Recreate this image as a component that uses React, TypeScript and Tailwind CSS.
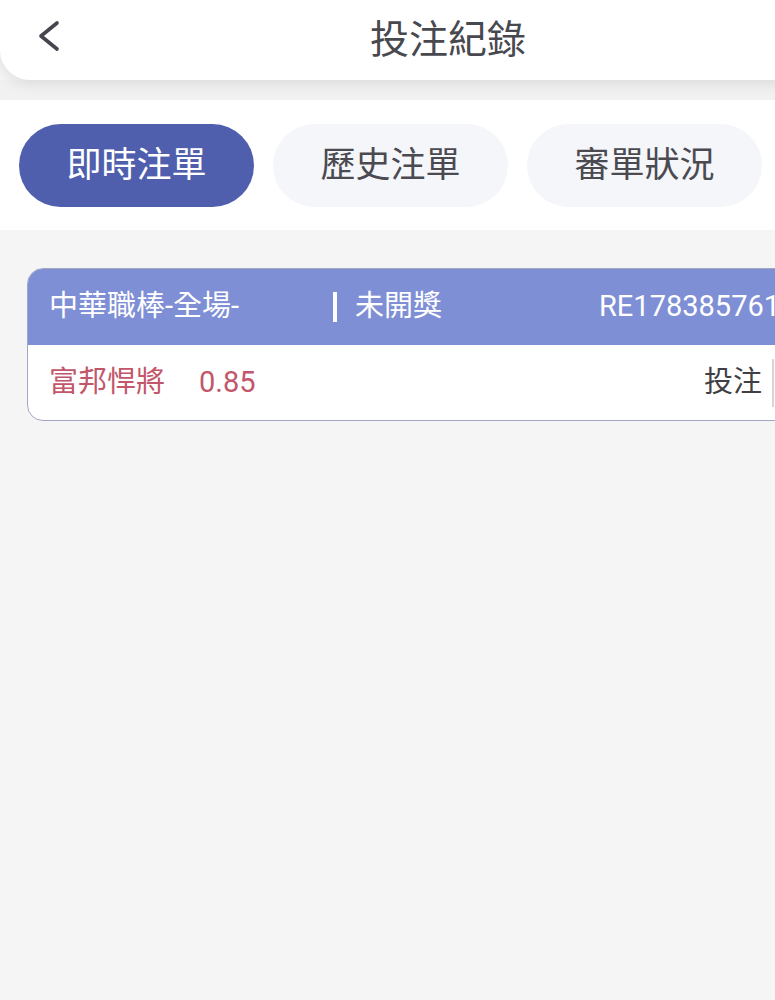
const tabs = [
  { label: "即時注單", active: true },
  { label: "歷史注單", active: false },
  { label: "審單狀況", active: false },
];

export default function App() {
  return (
    <div
      className="w-[775px] h-[1000px] overflow-hidden bg-[#f6f5f5]"
      style={{ fontFamily: 'Roboto, "Noto Sans CJK TC", "Noto Sans", sans-serif' }}
    >
      <div className="w-[896px]">
        <header className="relative z-10 h-[80px] bg-white rounded-b-[30px] shadow-[0_4px_14px_rgba(0,0,0,0.09)] flex items-center justify-center">
          <svg
            className="absolute left-[34px] top-[18px]"
            width="30"
            height="36"
            viewBox="0 0 30 36"
            fill="none"
          >
            <polyline
              points="23,5 7,18 23,31"
              stroke="#45454f"
              strokeWidth="3.6"
              strokeLinecap="round"
              strokeLinejoin="round"
            />
          </svg>
          <h1 className="text-[39px] leading-none text-[#48484f]">投注紀錄</h1>
        </header>

        <div className="h-[20px] bg-[#f1f1f1]" />

        <nav className="bg-white h-[130px] px-[19px] flex items-center gap-[19px]">
          {tabs.map((t) => (
            <button
              key={t.label}
              className={`w-[235px] h-[83px] rounded-full text-[35px] leading-none ${
                t.active ? "bg-[#4f5fae] text-white" : "bg-[#f5f6fa] text-[#4a4a50]"
              }`}
            >
              {t.label}
            </button>
          ))}
        </nav>

        <section className="px-[27px] pt-[38px]">
          <div className="rounded-[16px] border border-[#a3a6c4] bg-white overflow-hidden">
            <div className="h-[76px] bg-[#7f8fd5] text-white text-[29px] flex items-center pl-[21px]">
              <span className="w-[284px]">中華職棒-全場-</span>
              <span className="w-[266px] flex items-center">
                <span className="w-[4px] h-[30px] bg-white mr-[18px]" />
                未開獎
              </span>
              <span>RE1783857612</span>
            </div>
            <div className="h-[75px] flex items-center justify-between pl-[21px] pr-[20px] text-[29px]">
              <span className="text-[#c2566a]">
                富邦悍將<span className="ml-[34px]">0.85</span>
              </span>
              <span className="flex items-center text-[#3f3f45]">
                投注
                <span className="ml-[10px] h-[48px] pl-[10px] w-[76px] border-l-2 border-[#d6d6da] flex items-center">
                  100
                </span>
              </span>
            </div>
          </div>
        </section>
      </div>
    </div>
  );
}
